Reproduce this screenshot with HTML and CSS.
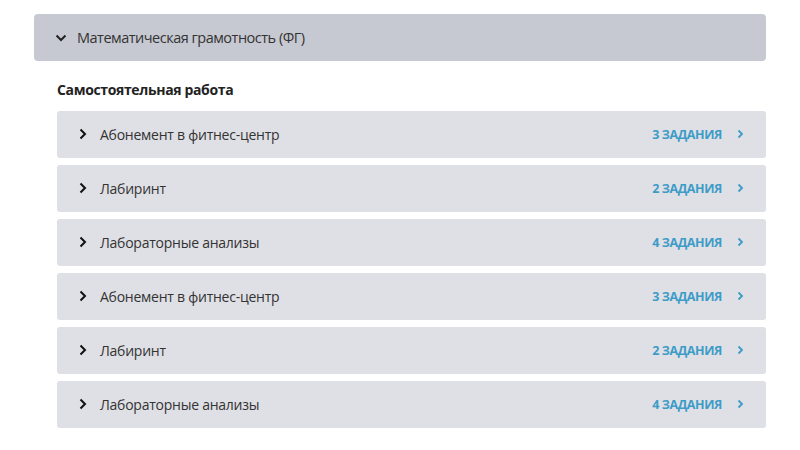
FILE: index.html
```html
<!DOCTYPE html>
<html lang="ru">
<head>
<meta charset="utf-8">
<link rel="stylesheet" href="styles.css">
</head>
<body>
<div class="page">
  <div class="group-head">
    <svg class="chev-down" width="12" height="8" viewBox="0 0 12 8"><path d="M1.5 1.5 L6 6 L10.5 1.5" fill="none" stroke="#222" stroke-width="2"/></svg>
    <span>Математическая грамотность (ФГ)</span>
  </div>
  <div class="section">
    <div class="section-title">Самостоятельная работа</div>
    <div class="rows">
      <div class="row"><svg class="chev" width="8" height="12" viewBox="0 0 8 12"><path d="M1.5 1.5 L6 6 L1.5 10.5" fill="none" stroke="#111" stroke-width="2"/></svg><span class="name">Абонемент в фитнес-центр</span><span class="count">3 ЗАДАНИЯ</span><svg class="go" width="7" height="10" viewBox="0 0 7 10"><path d="M1.5 1.5 L5 5 L1.5 8.5" fill="none" stroke="#3d9cc7" stroke-width="1.8"/></svg></div>
      <div class="row"><svg class="chev" width="8" height="12" viewBox="0 0 8 12"><path d="M1.5 1.5 L6 6 L1.5 10.5" fill="none" stroke="#111" stroke-width="2"/></svg><span class="name">Лабиринт</span><span class="count">2 ЗАДАНИЯ</span><svg class="go" width="7" height="10" viewBox="0 0 7 10"><path d="M1.5 1.5 L5 5 L1.5 8.5" fill="none" stroke="#3d9cc7" stroke-width="1.8"/></svg></div>
      <div class="row"><svg class="chev" width="8" height="12" viewBox="0 0 8 12"><path d="M1.5 1.5 L6 6 L1.5 10.5" fill="none" stroke="#111" stroke-width="2"/></svg><span class="name">Лабораторные анализы</span><span class="count">4 ЗАДАНИЯ</span><svg class="go" width="7" height="10" viewBox="0 0 7 10"><path d="M1.5 1.5 L5 5 L1.5 8.5" fill="none" stroke="#3d9cc7" stroke-width="1.8"/></svg></div>
      <div class="row"><svg class="chev" width="8" height="12" viewBox="0 0 8 12"><path d="M1.5 1.5 L6 6 L1.5 10.5" fill="none" stroke="#111" stroke-width="2"/></svg><span class="name">Абонемент в фитнес-центр</span><span class="count">3 ЗАДАНИЯ</span><svg class="go" width="7" height="10" viewBox="0 0 7 10"><path d="M1.5 1.5 L5 5 L1.5 8.5" fill="none" stroke="#3d9cc7" stroke-width="1.8"/></svg></div>
      <div class="row"><svg class="chev" width="8" height="12" viewBox="0 0 8 12"><path d="M1.5 1.5 L6 6 L1.5 10.5" fill="none" stroke="#111" stroke-width="2"/></svg><span class="name">Лабиринт</span><span class="count">2 ЗАДАНИЯ</span><svg class="go" width="7" height="10" viewBox="0 0 7 10"><path d="M1.5 1.5 L5 5 L1.5 8.5" fill="none" stroke="#3d9cc7" stroke-width="1.8"/></svg></div>
      <div class="row"><svg class="chev" width="8" height="12" viewBox="0 0 8 12"><path d="M1.5 1.5 L6 6 L1.5 10.5" fill="none" stroke="#111" stroke-width="2"/></svg><span class="name">Лабораторные анализы</span><span class="count">4 ЗАДАНИЯ</span><svg class="go" width="7" height="10" viewBox="0 0 7 10"><path d="M1.5 1.5 L5 5 L1.5 8.5" fill="none" stroke="#3d9cc7" stroke-width="1.8"/></svg></div>
    </div>
  </div>
</div>
</body>
</html>
```

FILE: styles.css
```css
html, body {
  margin: 0;
  padding: 0;
  background: #ffffff;
  font-family: "Open Sans", "Noto Sans", sans-serif;
}
.page {
  padding: 14px 34px 0 34px;
}
.group-head {
  height: 47px;
  background: #c7c9d2;
  border-radius: 4px;
  display: flex;
  align-items: center;
  padding-left: 21px;
  font-size: 14.5px;
  letter-spacing: -0.5px;
  color: #333;
}
.chev-down {
  margin-right: 10px;
  margin-top: 1px;
}
.section {
  padding-left: 23px;
}
.section-title {
  font-size: 14px;
  font-weight: bold;
  letter-spacing: -0.35px;
  color: #222;
  margin-top: 19px;
  height: 20px;
  line-height: 20px;
  margin-bottom: 11px;
}
.rows {
  display: flex;
  flex-direction: column;
  gap: 7px;
}
.row {
  height: 47px;
  background: #dfe0e5;
  border-radius: 3px;
  display: flex;
  align-items: center;
  padding-left: 22px;
  padding-right: 22px;
  font-size: 14px;
  letter-spacing: -0.25px;
  color: #333;
}
.chev {
  margin-right: 13px;
  margin-top: -2px;
}
.name {
  flex: 1;
}
.count {
  font-size: 12.5px;
  font-weight: bold;
  letter-spacing: -0.4px;
  color: #3d9cc7;
  margin-right: 15px;
}
.go {
  margin-top: -1px;
}
```
